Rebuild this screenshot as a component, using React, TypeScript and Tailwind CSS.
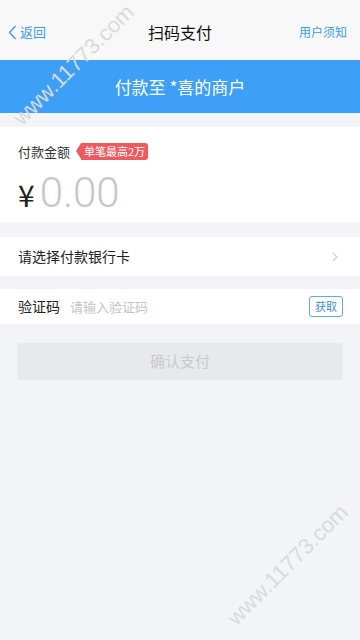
import React from 'react'

const font = { fontFamily: '"Noto Sans CJK SC", "Noto Sans", sans-serif' }

function Watermark({ className }: { className: string }) {
    return (
        <div
            className={`pointer-events-none absolute -rotate-45 text-[22px] leading-none text-[#dadada] ${className}`}
            style={{ fontFamily: '"Liberation Sans", Arial, sans-serif' }}
        >
            www.11773.com
        </div>
    )
}

export default function App() {
    return (
        <div className="relative min-h-[640px] w-[360px] overflow-hidden bg-[#f3f4f8]" style={font}>
            {/* header */}
            <div className="flex h-[60px] items-center justify-between bg-[#f8f8f8] px-2 pt-1">
                <div className="flex w-[80px] items-center gap-[3px] text-[13px] text-[#3b9cf0]">
                    <svg width="9" height="15" viewBox="0 0 9 15" fill="none">
                        <path d="M7.5 1L1.5 7.5L7.5 14" stroke="#3b9cf0" strokeWidth="1.4" />
                    </svg>
                    <span>返回</span>
                </div>
                <div className="text-[16px] text-[#111]">扫码支付</div>
                <div className="w-[80px] pr-[5px] text-right text-[12px] text-[#3b9cf0]">用户须知</div>
            </div>

            {/* merchant banner */}
            <div className="flex h-[53px] items-center justify-center bg-[#3d9ff6] text-[17px] text-white">
                付款至 *喜的商户
            </div>

            {/* amount */}
            <div className="mt-[14px] h-[95px] bg-white px-[18px] pt-[15px]">
                <div className="flex items-center gap-[7px]">
                    <span className="text-[13px] text-[#333]">付款金额</span>
                    <span className="relative ml-[4px] rounded-r-[3px] bg-[#ef5a5f] pl-[3px] pr-[3px] text-[11px] leading-[17px] text-white">
                        <span className="absolute left-[-5px] top-0 h-0 w-0 border-y-[8.5px] border-r-[5px] border-y-transparent border-r-[#ef5a5f]" />
                        单笔最高2万
                    </span>
                </div>
                <div className="mt-[6px] flex items-baseline">
                    <span className="text-[30px] leading-none text-[#222]">¥</span>
                    <span
                        className="ml-[5px] text-[42px] leading-[50px] text-[#c6c6c6]"
                        style={{ fontFamily: '"Roboto", "Noto Sans", sans-serif', fontWeight: 300 }}
                    >
                        0.00
                    </span>
                </div>
            </div>

            {/* bank card */}
            <div className="mt-[15px] flex h-[39px] items-center justify-between bg-white pl-[18px] pr-[22px]">
                <span className="text-[14px] text-[#222]">请选择付款银行卡</span>
                <svg width="6" height="10" viewBox="0 0 6 10" fill="none">
                    <path d="M1 1L5 5L1 9" stroke="#cfcfcf" strokeWidth="1.2" />
                </svg>
            </div>

            {/* verify code */}
            <div className="mt-[13px] flex h-[35px] items-center bg-white pl-[18px] pr-[17px]">
                <span className="w-[52px] text-[14px] text-[#222]">验证码</span>
                <span className="flex-1 text-[13px] text-[#c4c4c4]">请输入验证码</span>
                <span className="flex h-[21px] w-[34px] items-center justify-center rounded-[3px] border border-[#6aa9d6] text-[11px] text-[#3f8fcf]">
                    获取
                </span>
            </div>

            {/* confirm */}
            <div className="px-[17px] pt-[19px]">
                <div className="flex h-[37px] items-center justify-center rounded-[2px] bg-[#e8e9ed] text-[15px] text-[#c9c9cc]">
                    确认支付
                </div>
            </div>

            <Watermark className="left-[-6px] top-[54px]" />
            <Watermark className="left-[208px] top-[554px]" />
        </div>
    )
}
